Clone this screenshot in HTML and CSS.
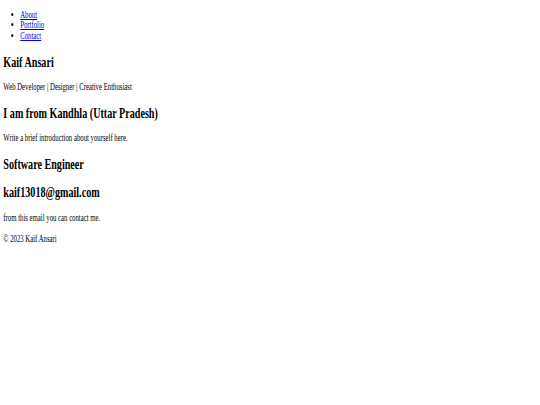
FILE: index.html
```html
<!DOCTYPE html>
<html lang="en">
<head>
<meta charset="utf-8">
<title>Kaif Ansari</title>
<link rel="stylesheet" href="styles.css">
</head>
<body>
<div class="page">
  <header class="site-header">
    <nav>
      <ul class="nav-list">
        <li><a href="#about">About</a></li>
        <li><a href="#portfolio">Portfolio</a></li>
        <li><a href="#contact">Contact</a></li>
      </ul>
    </nav>
  </header>
  <section class="intro">
    <h2>Kaif Ansari</h2>
    <p>Web Developer | Designer | Creative Enthusiast</p>
  </section>
  <section id="about">
    <h2>I am from Kandhla (Uttar Pradesh)</h2>
    <p>Write a brief introduction about yourself here.</p>
  </section>
  <section id="portfolio">
    <h2>Software Engineer</h2>
  </section>
  <section id="contact">
    <h2>kaif13018@gmail.com</h2>
    <p>from this email you can contact me.</p>
  </section>
  <footer class="site-footer">
    <p>&copy; 2023 Kaif Ansari</p>
  </footer>
</div>
</body>
</html>
```
FILE: styles.css
```css
html, body {
  margin: 0;
  padding: 0;
  background: #ffffff;
}

.page {
  width: 540px;
  box-sizing: border-box;
  padding: 9.6px 4.8px 0;
  font-family: "Liberation Serif", "Times New Roman", serif;
  font-size: 9.6px;
  line-height: 10.8px;
  color: #000000;
  transform: scaleX(0.703125);
  transform-origin: 0 0;
}

.nav-list {
  margin: 0 0 10.2px;
  padding-left: 24px;
}

.nav-list a {
  color: #0000ee;
  text-decoration: underline;
}

h2 {
  font-size: 14.4px;
  line-height: 16.6px;
  font-weight: bold;
  margin: 11.8px 0;
}

p {
  margin: 10.2px 0;
}
```
